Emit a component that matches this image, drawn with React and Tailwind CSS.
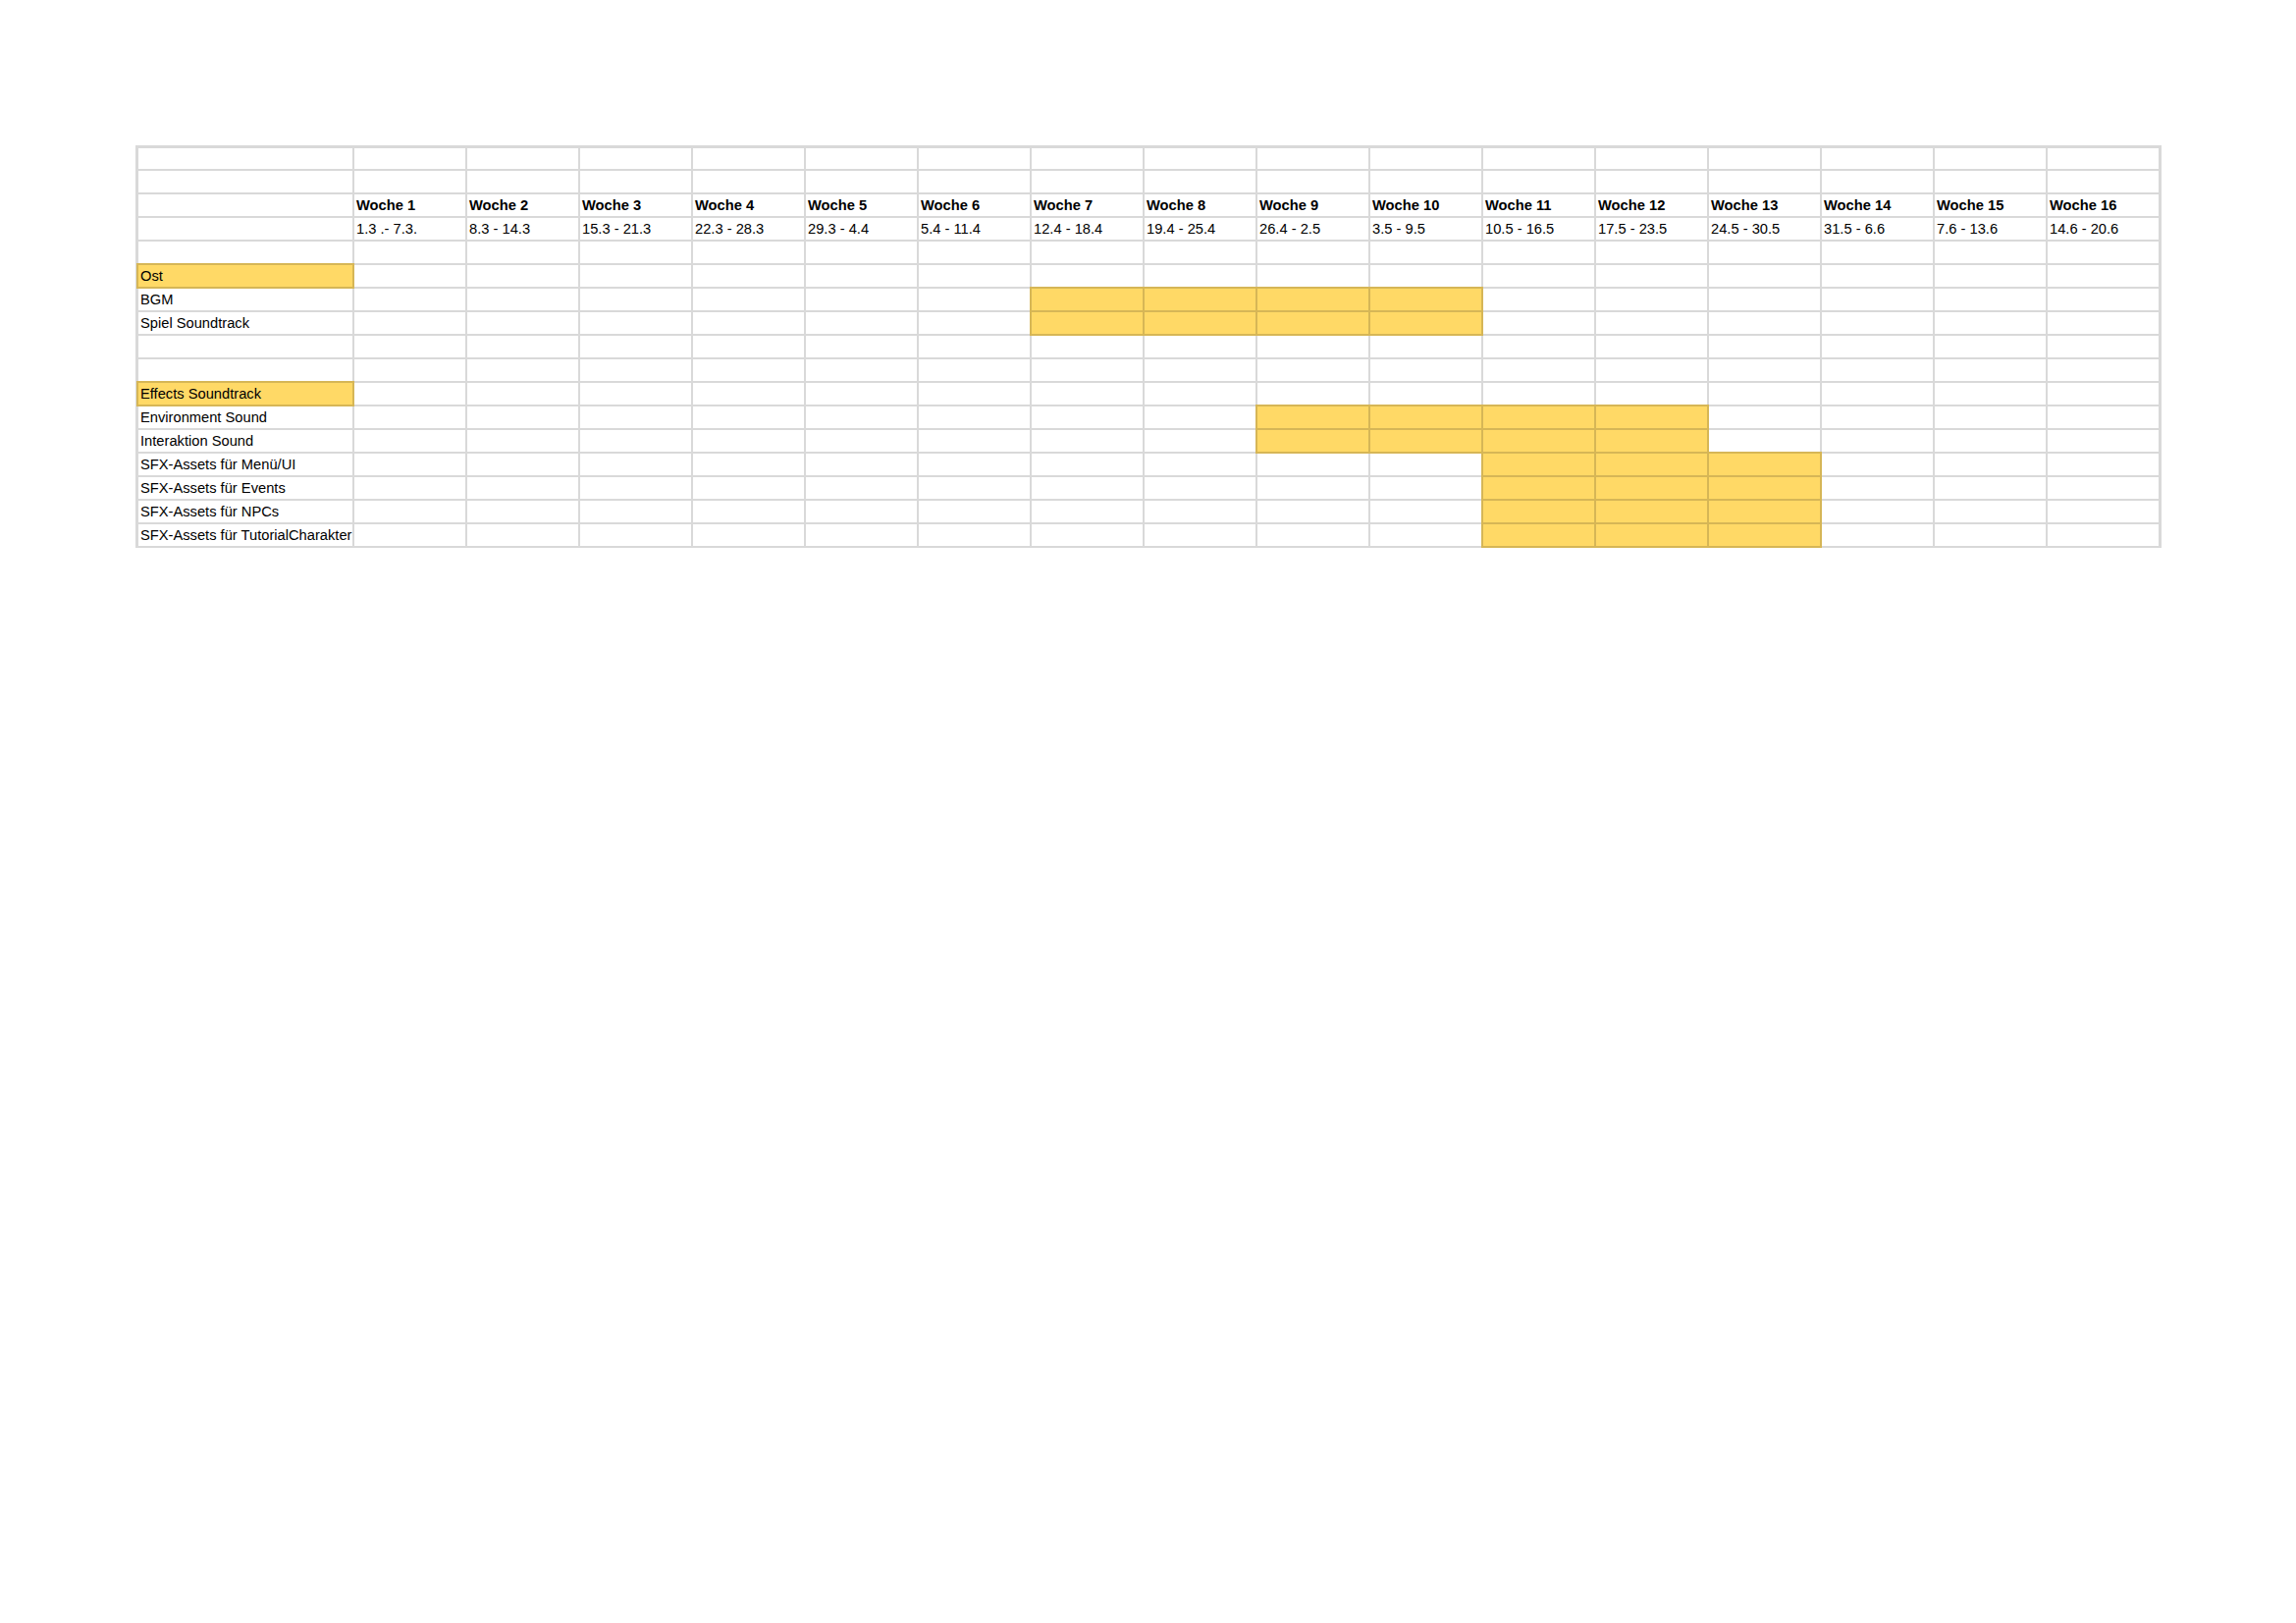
const weeks = [
  '1.3 .- 7.3.',
  '8.3 - 14.3',
  '15.3 - 21.3',
  '22.3 - 28.3',
  '29.3 - 4.4',
  '5.4 - 11.4',
  '12.4 - 18.4',
  '19.4 - 25.4',
  '26.4 - 2.5',
  '3.5 - 9.5',
  '10.5 - 16.5',
  '17.5 - 23.5',
  '24.5 - 30.5',
  '31.5 - 6.6',
  '7.6 - 13.6',
  '14.6 - 20.6',
]

// each row: label in column A, optional highlighted label, optional week range [from, to]
const rows = [
  { kind: 'blank' },
  { kind: 'blank' },
  { kind: 'header' },
  { kind: 'dates' },
  { kind: 'blank' },
  { label: 'Ost', group: true },
  { label: 'BGM', range: [7, 10] },
  { label: 'Spiel Soundtrack', range: [7, 10] },
  { kind: 'blank' },
  { kind: 'blank' },
  { label: 'Effects Soundtrack', group: true },
  { label: 'Environment Sound', range: [9, 12] },
  { label: 'Interaktion Sound', range: [9, 12] },
  { label: 'SFX-Assets für Menü/UI', range: [11, 13] },
  { label: 'SFX-Assets für Events', range: [11, 13] },
  { label: 'SFX-Assets für NPCs', range: [11, 13] },
  { label: 'SFX-Assets für TutorialCharakter', range: [11, 13] },
]

const cellBase = 'px-[2px] whitespace-nowrap overflow-hidden leading-[22px]'
const white = 'bg-white'
const yellow = 'bg-[#ffd966] outline-2 outline-[#d6b656]'

function Row({ row }) {
  const cells = []
  cells.push(
    <div key="a" className={`${cellBase} ${row.group ? yellow : white}`}>
      {row.label || ''}
    </div>
  )
  for (let w = 1; w <= 16; w++) {
    let content = ''
    let bold = ''
    if (row.kind === 'header') {
      content = `Woche ${w}`
      bold = ' font-bold'
    } else if (row.kind === 'dates') {
      content = weeks[w - 1]
    }
    const on = row.range && w >= row.range[0] && w <= row.range[1]
    cells.push(
      <div key={w} className={`${cellBase}${bold} ${on ? yellow : white}`}>
        {content}
      </div>
    )
  }
  return cells
}

export default function App() {
  return (
    <div
      className="min-h-screen w-full bg-white pl-[138px] pt-[148px] text-black"
      style={{ fontFamily: '"Liberation Sans", Arial, sans-serif' }}
    >
      <div className="inline-grid grid-cols-[218px_repeat(16,113px)] grid-rows-[21px_repeat(16,22px)] gap-[2px] bg-[#d9d9d9] border-[#d9d9d9] border-l-[3px] border-t-[3px] border-r-[3px] border-b-2 text-[14.7px]">
        {rows.map((row, i) => (
          <Row key={i} row={row} />
        ))}
      </div>
    </div>
  )
}
